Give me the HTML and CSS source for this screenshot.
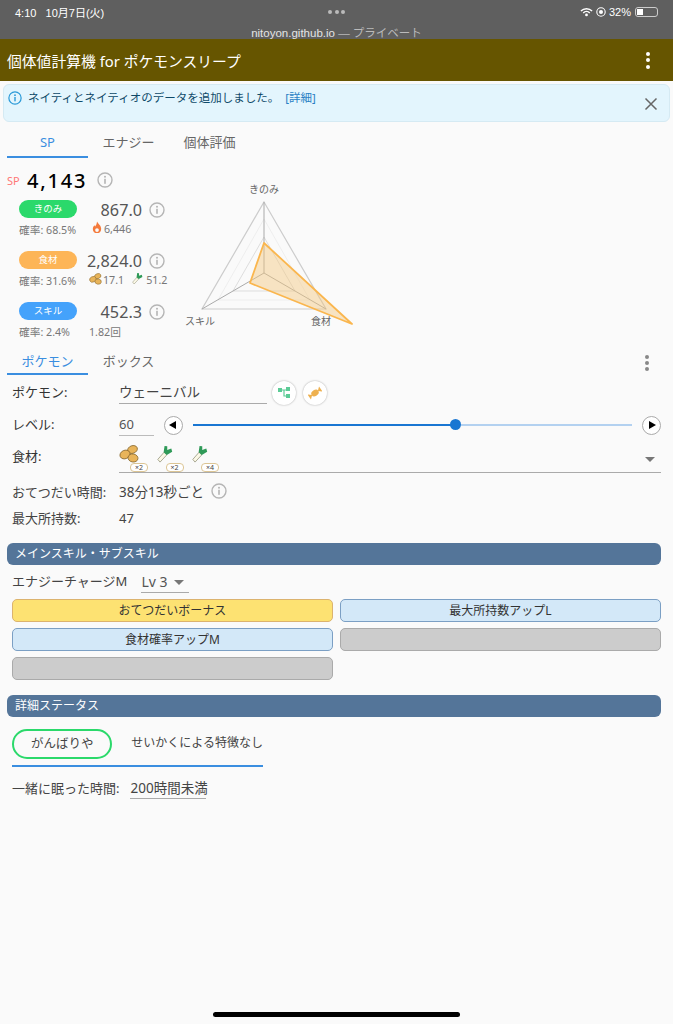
FILE: index.html
```html
<!DOCTYPE html>
<html lang="ja">
<head>
    <meta charset="UTF-8">
    <title>個体値計算機 for ポケモンスリープ</title>
    <link rel="stylesheet" href="styles.css">
</head>
<body>
    <svg class="defs" width="0" height="0">
        <symbol id="info" viewBox="0 0 16 16">
            <circle cx="8" cy="8" r="7" fill="none" stroke="currentColor" stroke-width="1.4"/>
            <circle cx="8" cy="4.8" r="1" fill="currentColor"/>
            <rect x="7.2" y="6.8" width="1.6" height="5" fill="currentColor"/>
        </symbol>
        <symbol id="beans" viewBox="0 0 20 18">
            <ellipse cx="13.5" cy="4.5" rx="5" ry="3.8" fill="#e8b45a" stroke="#8a6a30" stroke-width=".8" transform="rotate(-20 13.5 4.5)"/>
            <ellipse cx="6" cy="9.5" rx="5.2" ry="4.2" fill="#e8b45a" stroke="#8a6a30" stroke-width=".8" transform="rotate(-25 6 9.5)"/>
            <ellipse cx="14" cy="13" rx="5" ry="4" fill="#e8b45a" stroke="#8a6a30" stroke-width=".8" transform="rotate(10 14 13)"/>
        </symbol>
        <symbol id="leek" viewBox="0 0 18 20">
            <path d="M8 8 L1 16 L3.5 19 L11 11 Z" fill="#fbf8e6" stroke="#8a8a70" stroke-width=".8"/>
            <path d="M7.5 8 L8.5 1 L11.5 1.5 L11.5 5.5 L16 4 L17 7.5 L11 11 Z" fill="#2f9a58"/>
        </symbol>
    </svg>

    <div class="statusbar">
        <div class="status-top">
            <span>4:10&nbsp;&nbsp;&nbsp;10月7日(火)</span>
            <span class="status-dots"><i></i><i></i><i></i></span>
            <span class="status-right">
                <svg width="13" height="10" viewBox="0 0 14 10">
                    <path d="M1 4 A8.5 8.5 0 0 1 13 4" fill="none" stroke="#fff" stroke-width="1.6"/>
                    <path d="M3.5 6 A5 5 0 0 1 10.5 6" fill="none" stroke="#fff" stroke-width="1.6"/>
                    <circle cx="7" cy="8.2" r="1.5" fill="#fff"/>
                </svg>
                <svg width="10" height="10" viewBox="0 0 10 10">
                    <circle cx="5" cy="5" r="4.2" fill="none" stroke="#fff" stroke-width="1.1"/>
                    <circle cx="5" cy="5" r="2" fill="#fff"/>
                </svg>
                <span>32%</span>
                <span class="battery"><span class="battery-level"></span></span>
            </span>
        </div>
        <div class="status-url">nitoyon.github.io <span class="status-private">— プライベート</span></div>
    </div>

    <header class="appbar">
        <h1>個体値計算機 for ポケモンスリープ</h1>
        <div class="dots dots-white"><i></i><i></i><i></i></div>
    </header>

    <div class="alert">
        <svg class="alert-icon"><use href="#info"/></svg>
        <span>ネイティとネイティオのデータを追加しました。</span>
        <a class="alert-link">[詳細]</a>
        <svg class="alert-close" viewBox="0 0 14 14">
            <path d="M1.5 1.5 L12.5 12.5 M12.5 1.5 L1.5 12.5" stroke="#666" stroke-width="1.5"/>
        </svg>
    </div>

    <div class="tabs tabs-top">
        <div class="tab active">SP</div>
        <div class="tab">エナジー</div>
        <div class="tab">個体評価</div>
    </div>

    <section class="score">
        <div class="score-left">
            <div class="total">
                <span class="total-label">SP</span>
                <span class="total-value">4,143</span>
                <svg class="info"><use href="#info"/></svg>
            </div>

            <div class="stat">
                <div class="stat-main">
                    <span class="pill pill-green">きのみ</span>
                    <span class="stat-value">867.0</span>
                    <svg class="info"><use href="#info"/></svg>
                </div>
                <div class="stat-sub">
                    <span class="rate">確率: 68.5%</span>
                    <svg class="mini" viewBox="0 0 12 14">
                        <path d="M6 .5 C7 3 10.5 4.5 10.5 8.5 C10.5 11.5 8.5 13 6 13 C3.5 13 1.5 11.5 1.5 8.5 C1.5 6.5 2.5 5.5 3.2 4.5 L4 6 C4.8 4.5 6 3 6 .5 Z" fill="#f47a3c"/>
                        <circle cx="6" cy="9.8" r="2" fill="#fafafa"/>
                    </svg>
                    <span>6,446</span>
                </div>
            </div>

            <div class="stat">
                <div class="stat-main">
                    <span class="pill pill-orange">食材</span>
                    <span class="stat-value">2,824.0</span>
                    <svg class="info"><use href="#info"/></svg>
                </div>
                <div class="stat-sub">
                    <span class="rate">確率: 31.6%</span>
                    <svg class="mini-food mini-beans"><use href="#beans"/></svg>
                    <span>17.1</span>
                    <svg class="mini-food mini-leek"><use href="#leek"/></svg>
                    <span>51.2</span>
                </div>
            </div>

            <div class="stat">
                <div class="stat-main">
                    <span class="pill pill-blue">スキル</span>
                    <span class="stat-value">452.3</span>
                    <svg class="info"><use href="#info"/></svg>
                </div>
                <div class="stat-sub">
                    <span class="rate">確率: 2.4%</span>
                    <span>1.82回</span>
                </div>
            </div>
        </div>

        <svg class="radar" width="190" height="160" viewBox="175 175 190 160">
            <polygon points="264,219 310,300 218,300" fill="none" stroke="#eee"/>
            <polygon points="264,237 295,291 233,291" fill="none" stroke="#ddd"/>
            <polygon points="264,202 326,309 202,309" fill="none" stroke="#ccc" stroke-width="1.2"/>
            <path d="M264 273 L264 202 M264 273 L326 309 M264 273 L202 309" stroke="#aaa" stroke-width="1"/>
            <polygon points="264,243 352,324 250,283" fill="#f3c77f" fill-opacity=".45" stroke="#fab64e" stroke-width="1.8" stroke-linejoin="round"/>
            <text x="264" y="193" text-anchor="middle">きのみ</text>
            <text x="200" y="325" text-anchor="middle">スキル</text>
            <text x="321" y="325" text-anchor="middle">食材</text>
        </svg>
    </section>

    <div class="tabs-row">
        <div class="tabs">
            <div class="tab active">ポケモン</div>
            <div class="tab">ボックス</div>
        </div>
        <div class="dots dots-gray"><i></i><i></i><i></i></div>
    </div>

    <section class="form">
        <div class="row row-pokemon">
            <label>ポケモン:</label>
            <div class="input input-name">ウェーニバル</div>
            <span class="round-btn">
                <svg width="12" height="12" viewBox="0 0 12 12">
                    <path d="M3 3 H9 M6 3 V9 H9" stroke="#5ccb96" stroke-width="1.2" fill="none"/>
                    <rect x="0" y="1" width="4" height="4" fill="#5ccb96"/>
                    <rect x="8" y="0" width="4" height="4" fill="#5ccb96"/>
                    <rect x="8" y="7" width="4" height="4" fill="#5ccb96"/>
                </svg>
            </span>
            <span class="round-btn">
                <svg width="14" height="14" viewBox="0 0 14 14">
                    <g transform="rotate(-35 7 7)" fill="#eeb04e">
                        <ellipse cx="7" cy="7" rx="4" ry="3"/>
                        <path d="M3.5 7 L0 4 V10 Z M10.5 7 L14 4 V10 Z"/>
                    </g>
                </svg>
            </span>
        </div>

        <div class="row row-level">
            <label>レベル:</label>
            <div class="input input-level">60</div>
            <span class="step-btn"><i class="tri tri-left"></i></span>
            <div class="slider">
                <div class="slider-fill"></div>
                <div class="slider-thumb"></div>
            </div>
            <span class="step-btn"><i class="tri tri-right"></i></span>
        </div>

        <div class="row row-food">
            <label>食材:</label>
            <div class="food-select">
                <div class="food"><svg class="food-img"><use href="#beans"/></svg><span class="food-count">×2</span></div>
                <div class="food"><svg class="food-img"><use href="#leek"/></svg><span class="food-count">×2</span></div>
                <div class="food"><svg class="food-img"><use href="#leek"/></svg><span class="food-count">×4</span></div>
                <i class="select-arrow"></i>
            </div>
        </div>

        <div class="row row-plain row-help">
            <label>おてつだい時間:</label>
            <span class="help-value">38分13秒ごと</span>
            <svg class="info"><use href="#info"/></svg>
        </div>

        <div class="row row-plain row-carry">
            <label>最大所持数:</label>
            <span>47</span>
        </div>
    </section>

    <h2 class="section-title">メインスキル・サブスキル</h2>
    <div class="skill-line">
        <span>エナジーチャージM</span>
        <div class="lv-select">Lv 3 <i class="select-arrow"></i></div>
    </div>
    <div class="subskills">
        <div class="subskill sub-gold">おてつだいボーナス</div>
        <div class="subskill sub-blue">最大所持数アップL</div>
        <div class="subskill sub-blue">食材確率アップM</div>
        <div class="subskill sub-empty"></div>
        <div class="subskill sub-empty"></div>
    </div>

    <h2 class="section-title section-detail">詳細ステータス</h2>
    <div class="nature">
        <div class="nature-pill">がんばりや</div>
        <div class="nature-text">せいかくによる特徴なし</div>
    </div>
    <div class="sleep">
        <span>一緒に眠った時間:</span>
        <div class="sleep-value">200時間未満</div>
    </div>

    <div class="home-bar"></div>
</body>
</html>
```

FILE: styles.css
```css
* {
    box-sizing: border-box;
}

html, body {
    margin: 0;
    padding: 0;
}

body {
    position: relative;
    height: 1024px;
    overflow: hidden;
    background-color: #fafafa;
    color: #333;
    font-family: "Noto Sans", "Noto Sans CJK JP", sans-serif;
    font-size: 13px;
}

.defs {
    display: block;
    height: 0;
}

/* ios status bar */
.statusbar {
    height: 39px;
    background-color: #5f5f5f;
    color: #fff;
    font-family: "Liberation Sans", "Noto Sans CJK JP", sans-serif;
    font-size: 11px;
}

.status-top {
    display: grid;
    grid-template-columns: 1fr auto 1fr;
    align-items: center;
    height: 24px;
    padding: 0 15px;
}

.status-dots {
    display: flex;
    gap: 2.5px;
}

.status-dots i {
    display: block;
    width: 4px;
    height: 4px;
    background-color: #bbb;
    border-radius: 50%;
}

.status-right {
    display: flex;
    justify-content: flex-end;
    align-items: center;
    gap: 3px;
}

.battery {
    display: block;
    width: 23px;
    height: 10px;
    padding: 1px;
    margin-left: 1px;
    border: 1px solid #ccc;
    border-radius: 3px;
}

.battery-level {
    display: block;
    width: 6px;
    height: 100%;
    background-color: #fff;
}

.status-url {
    margin-top: 3px;
    text-align: center;
    font-size: 11.5px;
    line-height: 13px;
    color: #e4e4e4;
}

.status-private {
    color: #bbb;
}

/* app bar */
.appbar {
    display: flex;
    justify-content: space-between;
    align-items: center;
    height: 42px;
    padding: 0 23px 0 7px;
    background-color: #665500;
    color: #fff;
}

.appbar h1 {
    margin: 0;
    font-size: 14.8px;
    font-weight: 400;
}

.dots {
    display: flex;
    flex-direction: column;
}

.dots i {
    display: block;
    width: 4px;
    height: 4px;
    border-radius: 50%;
}

.dots-white {
    gap: 2.5px;
}

.dots-white i {
    background-color: #fff;
}

.dots-gray {
    gap: 2px;
}

.dots-gray i {
    background-color: #888;
}

/* alert */
.alert {
    display: flex;
    align-items: flex-start;
    position: relative;
    height: 38px;
    margin: 3px 3px 0;
    padding: 5px 0 0 4px;
    background-color: #e3f5fd;
    border: 1px solid #d5eaf3;
    border-radius: 6px;
    color: #0e4a69;
    font-size: 11.5px;
    line-height: 16px;
}

.alert-icon {
    width: 14px;
    height: 14px;
    margin: 1px 6px 0 0;
    color: #2b9ad8;
    flex: none;
}

.alert-link {
    margin-left: 6px;
    color: #2a7fc4;
}

.alert-close {
    position: absolute;
    top: 12px;
    right: 11px;
    width: 14px;
    height: 14px;
}

/* tabs */
.tabs {
    display: flex;
}

.tabs-top {
    height: 36px;
    margin-left: 7px;
    padding-top: 8px;
}

.tab {
    width: 81px;
    text-align: center;
    color: #666;
    font-size: 13px;
}

.tab.active {
    color: #3a8ee0;
    border-bottom: 2px solid #3a8ee0;
}

.tabs-top .tab {
    padding-top: 2px;
    line-height: 20px;
}

/* score */
.score {
    display: flex;
    height: 192px;
}

.score-left {
    width: 175px;
    flex: none;
    padding-left: 7px;
    padding-top: 10px;
}

.total {
    display: flex;
    align-items: center;
    height: 24px;
    margin-bottom: 8px;
}

.total-label {
    width: 20px;
    color: #f77;
    font-size: 11px;
}

.total-value {
    width: 70px;
    color: #000;
    font-size: 20px;
    font-weight: 500;
    letter-spacing: 1.8px;
}

.info {
    display: block;
    width: 16px;
    height: 16px;
    color: #b5b5b5;
    flex: none;
}

.stat {
    height: 51px;
    padding-left: 12px;
}

.stat-main {
    display: flex;
    align-items: center;
    height: 20px;
}

.pill {
    width: 58px;
    height: 18px;
    margin-top: -2px;
    border-radius: 9px;
    color: #fff;
    text-align: center;
    font-size: 9.5px;
    line-height: 18px;
    flex: none;
}

.pill-green {
    background-color: #2bd96b;
}

.pill-orange {
    background-color: #fdb557;
}

.pill-blue {
    background-color: #44a2fb;
}

.stat-value {
    width: 65px;
    margin-right: 7px;
    text-align: right;
    color: #555;
    font-size: 16.2px;
    white-space: nowrap;
}

.stat-sub {
    display: flex;
    align-items: center;
    height: 18px;
    color: #777;
    font-size: 10.7px;
    white-space: nowrap;
}

.rate {
    width: 70px;
    flex: none;
}

.mini {
    width: 12px;
    height: 13px;
    margin: -3px 1px 0 2px;
}

.mini-food {
    display: block;
    margin-top: -3px;
}

.mini-beans {
    width: 13px;
    height: 12px;
    margin-right: 1px;
}

.mini-leek {
    width: 11px;
    height: 13px;
    margin: -3px 3px 0 8px;
}

.radar {
    margin-top: 17px;
    overflow: visible;
}

.radar text {
    fill: #666;
    font-size: 10px;
}

/* second tabs */
.tabs-row {
    display: flex;
    justify-content: space-between;
    align-items: center;
    height: 25px;
    padding: 0 24px 0 7px;
}

.tabs-row .tabs {
    height: 25px;
}

.tabs-row .tab {
    line-height: 22px;
}

/* form */
.form {
    padding: 0 12px;
}

.row {
    display: flex;
    align-items: center;
}

.row label {
    width: 107px;
    flex: none;
}

.row-pokemon {
    height: 34px;
    align-items: flex-start;
}

.row-pokemon label {
    padding-top: 7px;
}

.input {
    height: 25px;
    border-bottom: 1px solid #aaa;
    line-height: 26px;
    color: #444;
}

.input-name {
    width: 148px;
    margin-top: 4px;
    font-size: 13.5px;
}

.round-btn {
    display: flex;
    justify-content: center;
    align-items: center;
    width: 24px;
    height: 24px;
    margin: 6px 0 0 5px;
    background-color: #fff;
    border-radius: 50%;
    box-shadow: 0 0 2px rgba(0, 0, 0, .35);
}

.round-btn + .round-btn {
    margin-left: 7px;
}

.row-level {
    height: 32px;
}

.row-level label {
    margin-top: -4px;
}

.input-level {
    width: 35px;
    margin-right: 10px;
    margin-top: -3px;
    color: #555;
    border-bottom-color: #bbb;
}

.step-btn {
    display: flex;
    justify-content: center;
    align-items: center;
    width: 19px;
    height: 19px;
    background-color: #fff;
    border: 1px solid #aaa;
    border-radius: 50%;
    flex: none;
}

.tri {
    display: block;
    width: 0;
    height: 0;
    border-top: 4px solid transparent;
    border-bottom: 4px solid transparent;
}

.tri-left {
    margin-right: 2px;
    border-right: 7px solid #000;
}

.tri-right {
    margin-left: 2px;
    border-left: 7px solid #000;
}

.slider {
    position: relative;
    height: 2px;
    margin: 0 10px;
    flex: 1;
    background-color: #b3d1f0;
}

.slider-fill {
    width: 59.7%;
    height: 2px;
    background-color: #1976d2;
}

.slider-thumb {
    position: absolute;
    top: -5px;
    left: calc(59.7% - 5px);
    width: 11px;
    height: 11px;
    background-color: #1976d2;
    border-radius: 50%;
}

.row-food {
    height: 34px;
    align-items: flex-start;
}

.row-food label {
    padding-top: 5px;
}

.food-select {
    display: flex;
    position: relative;
    height: 32px;
    flex: 1;
    padding-top: 4px;
    border-bottom: 1px solid #aaa;
}

.food {
    position: relative;
    width: 35.5px;
    height: 27px;
}

.food-img {
    display: block;
    width: 20px;
    height: 18px;
}

.food-count {
    position: absolute;
    top: 18px;
    left: 11px;
    width: 18px;
    height: 9px;
    background-color: #fff;
    border: 1px solid #dcc594;
    border-radius: 4px;
    text-align: center;
    font-size: 7px;
    line-height: 7px;
    color: #444;
}

.select-arrow {
    display: inline-block;
    width: 0;
    height: 0;
    border-left: 5px solid transparent;
    border-right: 5px solid transparent;
    border-top: 5px solid #777;
}

.food-select .select-arrow {
    position: absolute;
    top: 16px;
    right: 6px;
}

.row-plain {
    height: 27px;
    color: #444;
}

.row-help {
    height: 29px;
    padding-top: 3px;
}

.help-value {
    font-size: 13.5px;
}

.row-help .info {
    margin-left: 7px;
}

.row-carry {
    margin-bottom: 12px;
}

/* sections */
.section-title {
    height: 22px;
    margin: 0 12px 0 7px;
    padding-left: 8px;
    background-color: #547599;
    border-radius: 6px;
    color: #fff;
    font-size: 12px;
    font-weight: 400;
    line-height: 22px;
}

.skill-line {
    display: flex;
    align-items: flex-start;
    height: 34px;
    padding: 5px 12px 0;
    color: #444;
    line-height: 22px;
}

.lv-select {
    display: flex;
    align-items: center;
    gap: 6px;
    width: 48px;
    height: 23px;
    margin-left: 14px;
    padding-top: 2px;
    border-bottom: 1px solid #aaa;
    color: #555;
    font-size: 14px;
    white-space: nowrap;
}

.subskills {
    display: grid;
    grid-template-columns: 321px 321px;
    grid-auto-rows: 23px;
    gap: 6px 7px;
    padding: 0 12px;
}

.subskill {
    border: 1px solid;
    border-radius: 5px;
    text-align: center;
    font-size: 12px;
    line-height: 21px;
    color: #333;
}

.sub-gold {
    background-color: #fde272;
    border-color: #dcb36e;
}

.sub-blue {
    background-color: #d3e8f8;
    border-color: #7b9fc4;
}

.sub-empty {
    background-color: #ccc;
    border-color: #aaa;
}

.section-detail {
    margin-top: 15px;
}

.nature {
    display: flex;
    align-items: flex-start;
    width: 251px;
    height: 38px;
    margin: 12px 0 0 12px;
    border-bottom: 2px solid #3a8ee0;
}

.nature-pill {
    width: 101px;
    height: 30px;
    border: 2px solid #2bd96b;
    border-radius: 15px;
    text-align: center;
    line-height: 26px;
    font-size: 12.5px;
    color: #444;
}

.nature-text {
    margin-left: 19px;
    color: #444;
    font-size: 12px;
    line-height: 28px;
    white-space: nowrap;
}

.sleep {
    display: flex;
    align-items: flex-start;
    margin: 11px 0 0 12px;
    color: #444;
    line-height: 21px;
}

.sleep-value {
    width: 76px;
    height: 21px;
    margin-left: 11px;
    border-bottom: 1px solid #aaa;
    font-size: 13.5px;
    white-space: nowrap;
}

/* sits on top of the page */
.home-bar {
    position: absolute;
    left: 213px;
    top: 1012px;
    width: 247px;
    height: 5px;
    background-color: #000;
    border-radius: 3px;
}
```
